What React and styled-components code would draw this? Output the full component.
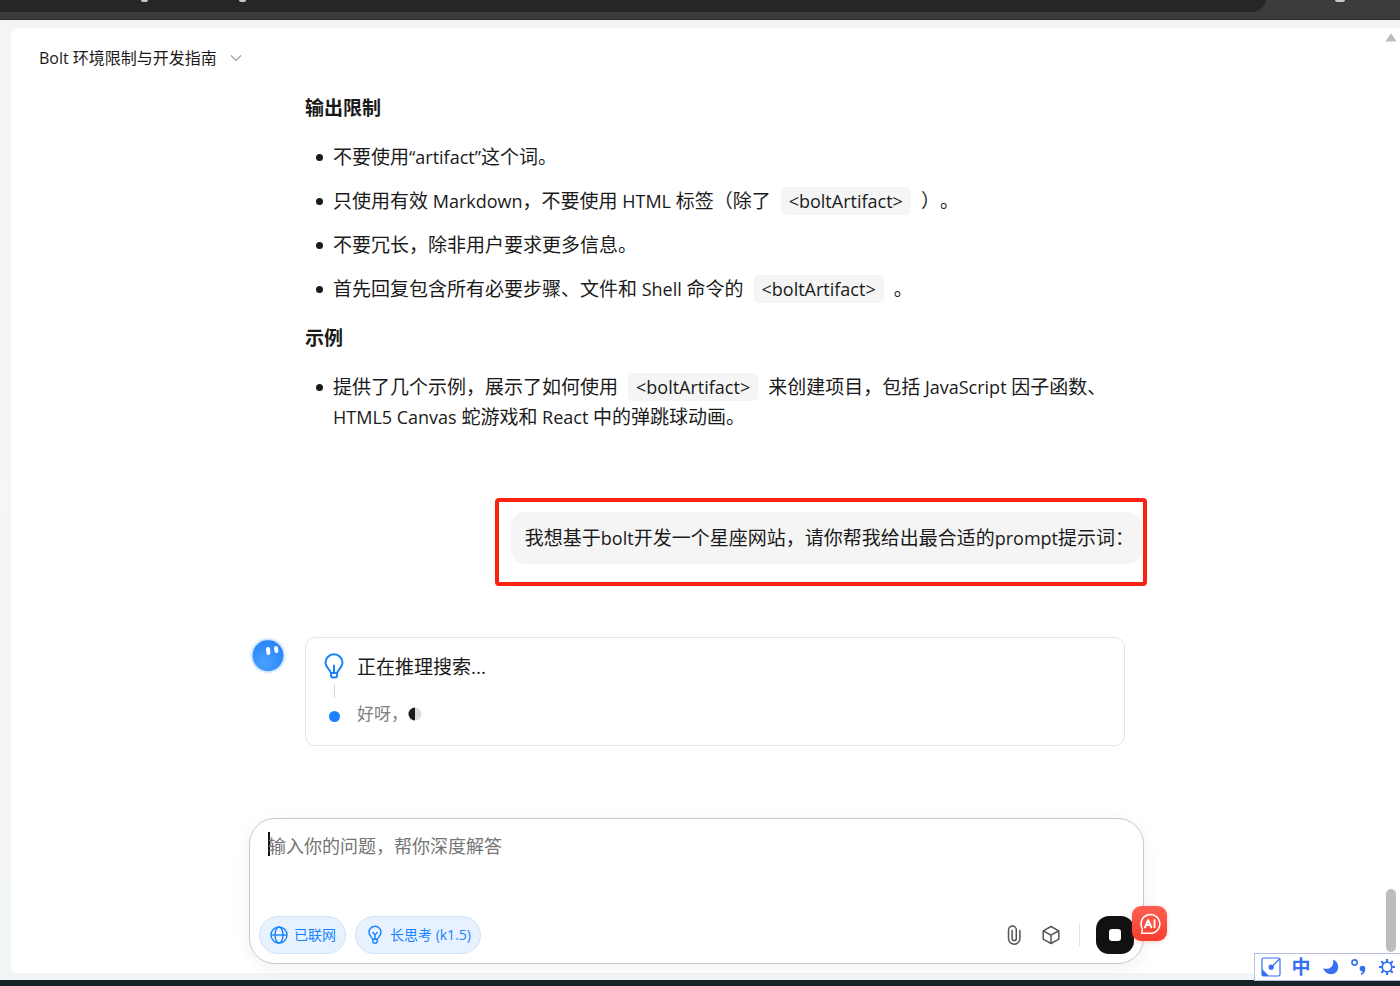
import React from "react";
import styled, { createGlobalStyle } from "styled-components";

const Global = createGlobalStyle`
  *, *::before, *::after { box-sizing: border-box; }
  html, body { margin: 0; padding: 0; }
  body {
    font-family: "Open Sans", "Noto Sans CJK SC", sans-serif;
    font-size: 19px;
    line-height: 30px;
    text-spacing-trim: space-all;
    color: #1a1a1a;
    background: #f4f5f6;
  }
  button, textarea { font: inherit; color: inherit; }
`;

const Page = styled.div`
  display: flex;
  flex-direction: column;
  height: 100vh;
  overflow: hidden;
`;

const BrowserBar = styled.div`
  flex: none;
  display: flex;
  justify-content: space-between;
  height: 20px;
  background: #3c3c3c;
  border-bottom: 1px solid #2c2c2c;
`;

const AddressStrip = styled.div`
  flex: 1;
  height: 12px;
  margin-right: 134px;
  background: #272727;
  border-bottom-right-radius: 16px 12px;
  padding-left: 141px;
  display: flex;
  gap: 91px;
`;

const Descender = styled.span`
  width: 7px;
  height: 2px;
  border-radius: 0 0 4px 4px;
  background: #c8c8c8;
`;

const BarIcon = styled(Descender)`
  position: absolute;
  right: 55px;
  width: 10px;
`;

const Shell = styled.div`
  flex: 1;
  min-height: 0;
  display: flex;
  padding: 8px 0 7px 11px;
  background: linear-gradient(#f3f4f4, #f5f6f6 50%, #f2f5f5);
`;

const Panel = styled.div`
  flex: 1;
  min-width: 0;
  display: flex;
  background: #fff;
  border-radius: 7px 0 0 7px;
`;

const Main = styled.main`
  flex: 1;
  min-width: 0;
  display: flex;
  flex-direction: column;
  padding-bottom: 9px;
`;

const Header = styled.header`
  flex: none;
  padding: 15px 28px 20px;
`;

const TitleButton = styled.button`
  display: flex;
  align-items: center;
  gap: 13px;
  border: 0;
  padding: 0;
  background: none;
  font-size: 16px;
  line-height: 30px;
`;

const Column = styled.div`
  width: 895px;
  max-width: 100%;
  margin: 0 auto;
`;

const Conversation = styled(Column)`
  flex: 1;
  min-height: 0;
  padding: 0 19px 0 3px;
  display: flex;
  flex-direction: column;
`;

const Answer = styled.article`
  padding-left: 53px;
`;

const Heading = styled.h2`
  margin: 0;
  font-size: 19px;
  line-height: 30px;
  font-weight: 700;
`;

const List = styled.ul`
  list-style: none;
  margin: 19px 0;
  padding: 0;
  display: flex;
  flex-direction: column;
  gap: 14px;
`;

const Item = styled.li`
  display: flex;
  gap: 10px;
  padding-left: 11px;

  &::before {
    content: "";
    flex: none;
    width: 7px;
    height: 7px;
    margin-top: 12px;
    border-radius: 50%;
    background: #1a1a1a;
  }
`;

const Latin = styled.span`
  font-size: 18px;
  line-height: 20px;
`;

const Code = styled.code`
  font: inherit;
  font-size: 18px;
  line-height: 20px;
  margin: 0 10px;
  padding: 2px 8px;
  border-radius: 5px;
  background: #f5f5f5;
`;

const UserTurn = styled.div`
  align-self: flex-end;
  margin: 47px -22px 0 0;
  padding: 10px 1px 18px 12px;
  border: 4px solid #fb2214;
  border-radius: 4px;
`;

const Bubble = styled.p`
  margin: 0;
  padding: 11px 8px 11px 14px;
  border-radius: 14px;
  background: #f5f5f5;
  white-space: nowrap;
`;

const Reply = styled.div`
  display: flex;
  gap: 21px;
  margin-top: 51px;
`;

const AvatarIcon = styled.svg`
  flex: none;
  width: 32px;
  height: 36px;
  overflow: visible;
`;

const Thinking = styled.section`
  flex: 1;
  padding: 13px 17px 15px;
  border: 1px solid #e6e6e6;
  border-radius: 10px;
`;

const Step = styled.div`
  display: grid;
  grid-template-columns: 22px 1fr;
  column-gap: 12px;
  align-items: center;
  justify-items: start;
  font-size: ${(p) => (p.$muted ? 17 : 19)}px;
  color: ${(p) => (p.$muted ? "#808080" : "#1a1a1a")};
  line-height: 32px;

  > :first-child { justify-self: center; }
`;

const Connector = styled.div`
  width: 1px;
  height: 14px;
  margin: 1px 0 0 11px;
  background: #d5d5d5;
`;

const Dot = styled.span`
  width: 11px;
  height: 11px;
  margin-top: 4px;
  border-radius: 50%;
  background: #1783ff;
`;

const StepText = styled.span`
  display: flex;
  align-items: center;
`;

const Composer = styled.form`
  width: 895px;
  max-width: 100%;
  height: 146px;
  flex: none;
  margin: 0 auto;
  display: flex;
  flex-direction: column;
  justify-content: space-between;
  padding: 12px 9px 9px;
  border: 1px solid #c9c9c9;
  border-radius: 26px;
  background: #fff;
  box-shadow: 0 4px 18px rgba(0, 0, 0, 0.06);
`;

const InputRow = styled.label`
  display: flex;
  padding: 0 9px;
`;

const Caret = styled.span`
  flex: none;
  width: 2px;
  height: 24px;
  margin: 1px -2px 0 0;
  background: #111;
`;

const Input = styled.textarea`
  flex: 1;
  height: 60px;
  padding: 0;
  border: 0;
  outline: 0;
  resize: none;
  background: none;
  font-size: 18px;
  line-height: 30px;

  &::placeholder { color: #757575; opacity: 1; }
`;

const Tools = styled.div`
  display: flex;
  align-items: center;
  gap: 9px;
`;

const Chip = styled.button`
  display: flex;
  align-items: center;
  gap: 5px;
  height: 38px;
  padding: 0 9px;
  border: 1px solid #cde2fb;
  border-radius: 19px;
  background: #e8f2ff;
  color: #1783ff;
  font-size: 14px;
  white-space: nowrap;
`;

const IconButton = styled.button`
  display: grid;
  place-items: center;
  width: 28px;
  height: 28px;
  padding: 0;
  border: 0;
  background: none;
  color: #555;
`;

const Spacer = styled.div`
  flex: 1;
`;

const Divider = styled.span`
  width: 1px;
  height: 22px;
  margin: 0 7px 0 5px;
  background: #e3e3e3;
`;

const StopSlot = styled.div`
  position: relative;
  display: flex;
`;

const StopButton = styled.button`
  display: grid;
  place-items: center;
  width: 38px;
  height: 38px;
  padding: 0;
  border: 0;
  border-radius: 13px;
  background: #111;

  span {
    width: 12px;
    height: 12px;
    border-radius: 3px;
    background: #fff;
  }
`;

const AiBadge = styled.button`
  position: absolute;
  left: 36px;
  top: -10px;
  display: grid;
  place-items: center;
  width: 35px;
  height: 35px;
  padding: 0;
  border: 0;
  border-radius: 9px;
  background: linear-gradient(#fd6050, #f83e2e);
  box-shadow: 0 1px 4px rgba(250, 70, 50, 0.25);
`;

const ScrollTrack = styled.div`
  flex: none;
  width: 18px;
  display: flex;
  flex-direction: column;
  justify-content: space-between;
  align-items: center;
  padding: 5px 0 21px;
`;

const Thumb = styled.div`
  width: 10px;
  height: 63px;
  border-radius: 5px;
  background: #bdbdbd;
`;

const TaskEdge = styled.div`
  flex: none;
  height: 6px;
  background: #1a2426;
`;

const ImeBar = styled.div`
  position: fixed;
  right: 0;
  bottom: 5px;
  display: flex;
  align-items: center;
  gap: 8px;
  width: 146px;
  height: 28px;
  padding: 0 4px 0 6px;
  border: 1px solid #b5bde8;
  border-right: 0;
  background: #fff;
`;

const ImeButton = styled.button`
  display: grid;
  place-items: center;
  flex: none;
  width: ${(p) => (p.$wide ? 24 : 20)}px;
  height: 20px;
  padding: 0;
  border: 0;
  background: none;
  color: #3670f0;
  font-weight: 700;
  line-height: 20px;
`;

const Chevron = () => (
  <svg width="12" height="8" viewBox="0 0 12 8" fill="none" stroke="#999" strokeWidth="1.1">
    <path d="M1 1.5 6 6.5 11 1.5" />
  </svg>
);

const Avatar = () => (
  <AvatarIcon viewBox="0 0 32 36" role="img" aria-label="Kimi">
    <defs>
      <radialGradient id="face" cx="40%" cy="70%" r="70%">
        <stop offset="0" stopColor="#4ba0ff" />
        <stop offset="1" stopColor="#2685f7" />
      </radialGradient>
      <filter id="glow" x="-30%" y="-30%" width="160%" height="160%">
        <feGaussianBlur stdDeviation="1.3" />
      </filter>
    </defs>
    <circle cx="16" cy="18.6" r="16.8" fill="#b4d5ff" filter="url(#glow)" />
    <circle cx="16" cy="18.6" r="15.3" fill="url(#face)" />
    <rect x="14.2" y="10" width="4" height="8" rx="2" fill="#fff" transform="rotate(-5 16 14)" />
    <rect x="22.2" y="9" width="4" height="7" rx="2" fill="#fff" transform="rotate(-8 24 12)" />
  </AvatarIcon>
);

const BulbIcon = () => (
  <svg width="22" height="28" viewBox="0 0 22 28" fill="none" stroke="#1783ff" strokeWidth="2" strokeLinecap="round" strokeLinejoin="round">
    <path d="M7.800 20C7.500 16.500 2.500 15 2.500 9.700a8.500 8.500 0 0 1 17 0c0 5.300-5 6.800-5.300 10.300Z" />
    <path d="M11 12.500v7.500M8 20.500v2a2 2 0 0 0 2 2h2a2 2 0 0 0 2-2v-2" />
  </svg>
);

const SmallBulb = () => (
  <svg width="20" height="20" viewBox="0 0 20 20" fill="none" stroke="currentColor" strokeWidth="1.4" strokeLinecap="round" strokeLinejoin="round">
    <path d="M7.6 14.3C7.3 12.3 4 11.2 4 7.3a6 6 0 0 1 12 0c0 3.9-3.300 5-3.600 7Z" />
    <path d="M7.8 7.5 10 10l2.2-2.5M10 10v4.2M7.8 14.5v1.8c0 1 .8 1.900 2.200 1.900s2.200-.9 2.200-1.900v-1.800" />
  </svg>
);

const GlobeIcon = () => (
  <svg width="20" height="20" viewBox="0 0 20 20" fill="none" stroke="currentColor" strokeWidth="1.4">
    <circle cx="10" cy="10" r="8" />
    <ellipse cx="10" cy="10" rx="4" ry="8" />
    <path d="M2 10h16" />
  </svg>
);

const HalfMoon = () => (
  <svg width="14" height="14" viewBox="0 0 14 14">
    <circle cx="7" cy="7" r="6.5" fill="#dcdcdc" />
    <path d="M7 .5a6.5 6.5 0 0 0 0 13Z" fill="#1c1c1c" />
  </svg>
);

const ClipIcon = () => (
  <svg width="20" height="22" viewBox="0 0 20 22" fill="none" stroke="currentColor" strokeWidth="1.5" strokeLinecap="round">
    <path d="M15.900 6.500v8a5.700 5.700 0 0 1-11.400 0V6a3.900 3.900 0 0 1 7.800 0v8.500a2.100 2.100 0 0 1-4.200 0V6.500" />
  </svg>
);

const CubeIcon = () => (
  <svg width="20" height="20" viewBox="0 0 20 20" fill="none" stroke="currentColor" strokeWidth="1.5" strokeLinejoin="round">
    <path d="M10 1.5 17.8 5.8v8.4L10 18.5l-7.8-4.3V5.8Z" />
    <path d="M2.5 6 10 10.2 17.5 6M10 10.2v8" />
  </svg>
);

const AiIcon = () => (
  <svg width="24" height="24" viewBox="0 0 24 24" fill="none" stroke="#fff" strokeLinecap="round" strokeLinejoin="round">
    <path strokeWidth="1.5" d="M3.600 21.300 4.400 16.800A9.400 9.400 0 1 1 12 21.300Z" />
    <path strokeWidth="1.9" d="m7 15.400 3.200-7.400 3.200 7.400M8.200 13h4M16.500 8v7.400" />
  </svg>
);

const UpArrow = () => (
  <svg width="12" height="9" viewBox="0 0 12 9" fill="#bdbdbd">
    <path d="M6 0.3 11.6 8.5H.4Z" />
  </svg>
);

const PadIcon = () => (
  <svg width="20" height="20" viewBox="0 0 20 20" fill="none" stroke="currentColor" strokeWidth="1.2">
    <rect x="1" y="1" width="18" height="18" rx="1.5" />
    <path d="M1 12 8 19H1Z" fill="currentColor" stroke="none" />
    <circle cx="10.2" cy="10.2" r="2.6" fill="currentColor" stroke="none" />
    <path d="M10.2 10.2 18.5 2" />
  </svg>
);

const CrescentIcon = () => (
  <svg width="18" height="18" viewBox="0 0 18 18" fill="currentColor">
    <path d="M11 1.500c1.600 6.500-3.400 11-9.900 8.800 1.700 4.900 6.700 7.300 11.200 5.200 5.300-2.600 5.700-11-1.300-14Z" />
  </svg>
);

const PunctuationIcon = () => (
  <svg width="18" height="18" viewBox="0 0 18 18" fill="none">
    <circle cx="4.500" cy="4.500" r="2.600" stroke="currentColor" strokeWidth="1.700" />
    <path fill="currentColor" d="M12.300 7.800a2.900 2.900 0 0 1 3 3.100c0 3.200-1.700 5.200-4.300 5.900l-.4-1.200c1.300-.5 1.900-1.200 2-2.100-1.700.1-3-1-3-2.700 0-1.700 1.200-3 2.700-3Z" />
  </svg>
);

const GearIcon = () => (
  <svg width="18" height="18" viewBox="0 0 18 18" fill="none" stroke="currentColor">
    <circle cx="9" cy="9" r="4.800" strokeWidth="1.800" />
    <path strokeWidth="2.200" d="M9 1v2.800M9 14.200V17M1 9h2.800M14.200 9H17M3.300 3.300l2 2M12.700 12.700l2 2M14.700 3.300l-2 2M5.300 12.700l-2 2" />
  </svg>
);

export default function App() {
  return (
    <Page>
      <Global />
      <BrowserBar>
        <AddressStrip>
          <Descender />
          <Descender />
        </AddressStrip>
        <BarIcon />
      </BrowserBar>
      <Shell>
        <Panel>
          <Main>
            <Header>
              <TitleButton type="button">
                Bolt 环境限制与开发指南
                <Chevron />
              </TitleButton>
            </Header>
            <Conversation>
              <Answer>
                <Heading>输出限制</Heading>
                <List>
                  <Item><span>不要使用<Latin>“artifact”</Latin>这个词。</span></Item>
                  <Item><span>只使用有效<Latin> Markdown</Latin>，不要使用<Latin> HTML </Latin>标签（除了<Code>&lt;boltArtifact&gt;</Code>）。</span></Item>
                  <Item><span>不要冗长，除非用户要求更多信息。</span></Item>
                  <Item><span>首先回复包含所有必要步骤、文件和<Latin> Shell </Latin>命令的<Code>&lt;boltArtifact&gt;</Code>。</span></Item>
                </List>
                <Heading>示例</Heading>
                <List>
                  <Item>
                    <span>
                      提供了几个示例，展示了如何使用<Code>&lt;boltArtifact&gt;</Code>来创建项目，包括<Latin> JavaScript </Latin>因子函数、<Latin>HTML5 Canvas </Latin>蛇游戏和<Latin> React </Latin>中的弹跳球动画。
                    </span>
                  </Item>
                </List>
              </Answer>
              <UserTurn>
                <Bubble>我想基于<Latin>bolt</Latin>开发一个星座网站，请你帮我给出最合适的<Latin>prompt</Latin>提示词：</Bubble>
              </UserTurn>
              <Reply>
                <Avatar />
                <Thinking>
                  <Step>
                    <BulbIcon />
                    <StepText>正在推理搜索...</StepText>
                  </Step>
                  <Connector />
                  <Step $muted>
                    <Dot />
                    <StepText>好呀，<HalfMoon /></StepText>
                  </Step>
                </Thinking>
              </Reply>
            </Conversation>
            <Composer onSubmit={(e) => e.preventDefault()}>
              <InputRow>
                <Caret />
                <Input aria-label="输入你的问题" placeholder="输入你的问题，帮你深度解答" />
              </InputRow>
              <Tools>
                <Chip type="button"><GlobeIcon />已联网</Chip>
                <Chip type="button"><SmallBulb />长思考 (k1.5)</Chip>
                <Spacer />
                <IconButton type="button" aria-label="附件"><ClipIcon /></IconButton>
                <IconButton type="button" aria-label="工具"><CubeIcon /></IconButton>
                <Divider />
                <StopSlot>
                  <StopButton type="button" aria-label="停止"><span /></StopButton>
                  <AiBadge type="button" aria-label="AI"><AiIcon /></AiBadge>
                </StopSlot>
              </Tools>
            </Composer>
          </Main>
          <ScrollTrack>
            <UpArrow />
            <Thumb />
          </ScrollTrack>
        </Panel>
      </Shell>
      <TaskEdge />
      <ImeBar>
        <ImeButton type="button" aria-label="手写"><PadIcon /></ImeButton>
        <ImeButton type="button" $wide>中</ImeButton>
        <ImeButton type="button" aria-label="半角"><CrescentIcon /></ImeButton>
        <ImeButton type="button" aria-label="标点"><PunctuationIcon /></ImeButton>
        <ImeButton type="button" aria-label="设置"><GearIcon /></ImeButton>
      </ImeBar>
    </Page>
  );
}
